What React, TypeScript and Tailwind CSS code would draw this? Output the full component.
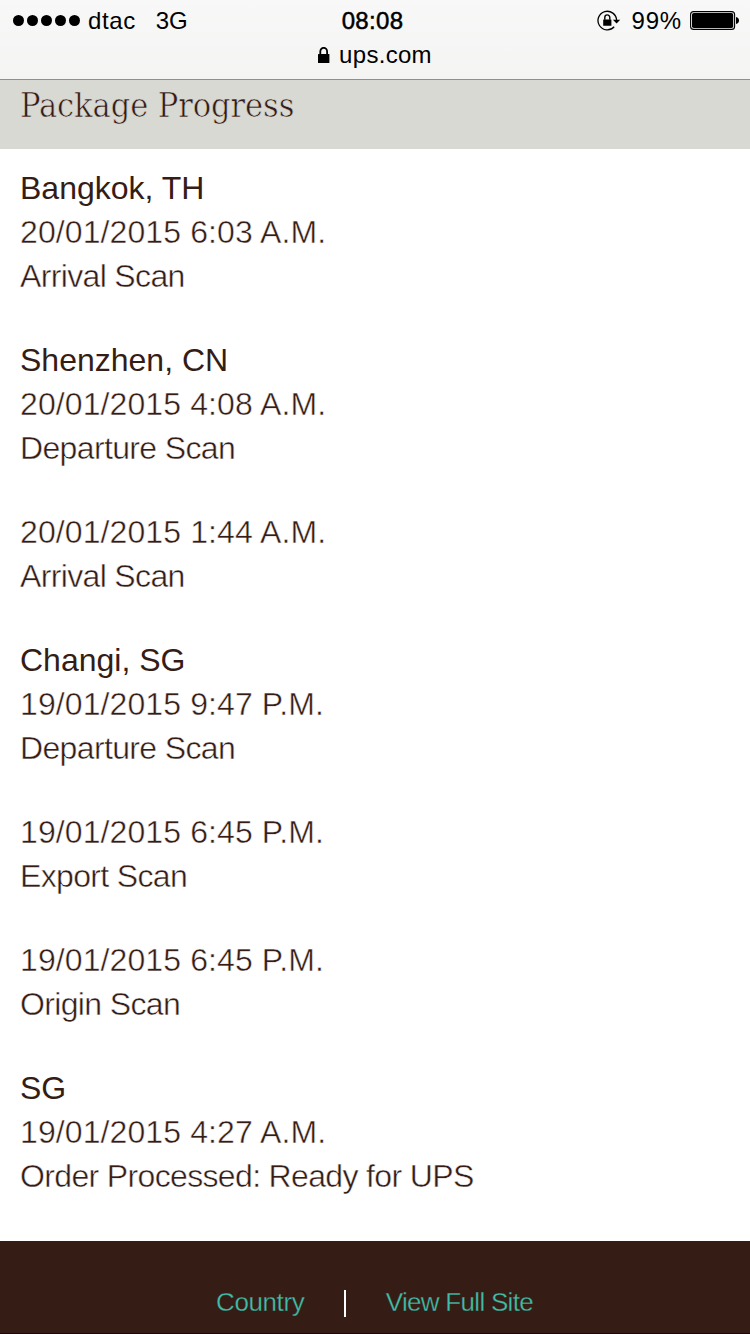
interface Scan {
  time: string
  status: string
}

interface Stop {
  place: string
  scans: Scan[]
}

const stops: Stop[] = [
  {
    place: "Bangkok, TH",
    scans: [{ time: "20/01/2015 6:03 A.M.", status: "Arrival Scan" }],
  },
  {
    place: "Shenzhen, CN",
    scans: [
      { time: "20/01/2015 4:08 A.M.", status: "Departure Scan" },
      { time: "20/01/2015 1:44 A.M.", status: "Arrival Scan" },
    ],
  },
  {
    place: "Changi, SG",
    scans: [
      { time: "19/01/2015 9:47 P.M.", status: "Departure Scan" },
      { time: "19/01/2015 6:45 P.M.", status: "Export Scan" },
      { time: "19/01/2015 6:45 P.M.", status: "Origin Scan" },
    ],
  },
  {
    place: "SG",
    scans: [{ time: "19/01/2015 4:27 A.M.", status: "Order Processed: Ready for UPS" }],
  },
]

function RotationLock() {
  return (
    <svg className="h-[22px] w-[24px]" viewBox="0 0 24 22" fill="none" stroke="black">
      <path d="M19.6 10.5 A9.3 9.3 0 1 0 17.2 16.8" strokeWidth="1.3" />
      <path d="M15.9 9.8 H23.2 L19.6 13.6 Z" fill="black" stroke="none" />
      <rect x="6.2" y="9.4" width="8.2" height="6.4" rx="0.4" fill="black" stroke="none" />
      <path d="M7.8 9.8 V7.4 a2.5 2.5 0 0 1 5 0 V9.8" strokeWidth="1.4" />
    </svg>
  )
}

function Padlock() {
  return (
    <svg className="h-[17px] w-[12px]" viewBox="0 0 12 17" fill="none">
      <rect x="0" y="7" width="11.4" height="9" rx="0.6" fill="black" />
      <path d="M2.3 8 V4.6 a3.4 3.8 0 0 1 6.8 0 V8" stroke="black" strokeWidth="1.8" />
    </svg>
  )
}

function Battery() {
  return (
    <svg className="h-[19px] w-[50px]" viewBox="0 0 50 19" fill="none">
      <rect x="0.6" y="0.6" width="44" height="17.8" rx="3" stroke="black" strokeWidth="1.1" />
      <rect x="2" y="2" width="41.2" height="15" rx="1.8" fill="black" />
      <path d="M46 6 C48 6.3 49 7.6 49 9.5 C49 11.4 48 12.7 46 13 Z" fill="black" />
    </svg>
  )
}

function StatusBar() {
  return (
    <header className="h-20 border-b border-[#8f8f8e] bg-gradient-to-b from-[#f8f8f8] to-[#f4f4f3] text-2xl text-black">
      <div className="grid h-[41px] grid-cols-3 items-center">
        <div className="flex items-center pl-[13px]">
          <div className="flex gap-[3px]">
            {[0, 1, 2, 3, 4].map((dot) => (
              <span key={dot} className="size-[11px] rounded-full bg-black" />
            ))}
          </div>
          <span className="ml-2 tracking-[0.6px]">dtac</span>
          <span className="ml-5">3G</span>
        </div>
        <div className="pr-[5px] text-center tracking-[0.3px] [-webkit-text-stroke:0.5px_black]">08:08</div>
        <div className="flex items-center justify-end pr-[10px]">
          <RotationLock />
          <span className="ml-[11px] mr-2 tracking-[0.8px]">99%</span>
          <Battery />
        </div>
      </div>
      <div className="flex h-7 items-center justify-center">
        <Padlock />
        <span className="ml-[9px] tracking-[0.3px]">ups.com</span>
      </div>
    </header>
  )
}

export default function App() {
  return (
    <div className="flex h-[1334px] w-[750px] flex-col overflow-hidden bg-white font-['Liberation_Sans',Arial,sans-serif] text-[#351c15]">
      <StatusBar />

      <div className="h-[69px] bg-[#d9d9d4] px-5">
        <h1 className="font-['DejaVu_Serif_Condensed','DejaVu_Serif',serif] text-[34px] leading-[50px] tracking-[-0.1px] whitespace-nowrap [-webkit-text-stroke:0.6px_#d9d9d4]">
          Package Progress
        </h1>
      </div>

      <main className="flex flex-1 flex-col gap-10 px-5 pt-[17px] text-[32px] leading-[44px]">
        {stops.map((stop) => (
          <section key={stop.place}>
            <h2>{stop.place}</h2>
            <div className="flex flex-col gap-10 [-webkit-text-stroke:0.45px_white]">
              {stop.scans.map((scan, index) => (
                <div key={index}>
                  <p className="tracking-[0.1px]">{scan.time}</p>
                  <p className="tracking-[-0.65px]">{scan.status}</p>
                </div>
              ))}
            </div>
          </section>
        ))}
      </main>

      <footer className="flex h-[93px] items-start border-b border-[#1d0508] bg-[#351c15] pt-[46px] pl-[216px] text-[26px] leading-[30px] text-[#41bda8]">
        <a className="tracking-[-0.4px] [-webkit-text-stroke:0.3px_#351c15]">Country</a>
        <span className="mt-[3px] ml-10 h-[27px] w-[1.5px] bg-white" />
        <a className="ml-10 tracking-[-0.7px] [-webkit-text-stroke:0.3px_#351c15]">View Full Site</a>
      </footer>
    </div>
  )
}
